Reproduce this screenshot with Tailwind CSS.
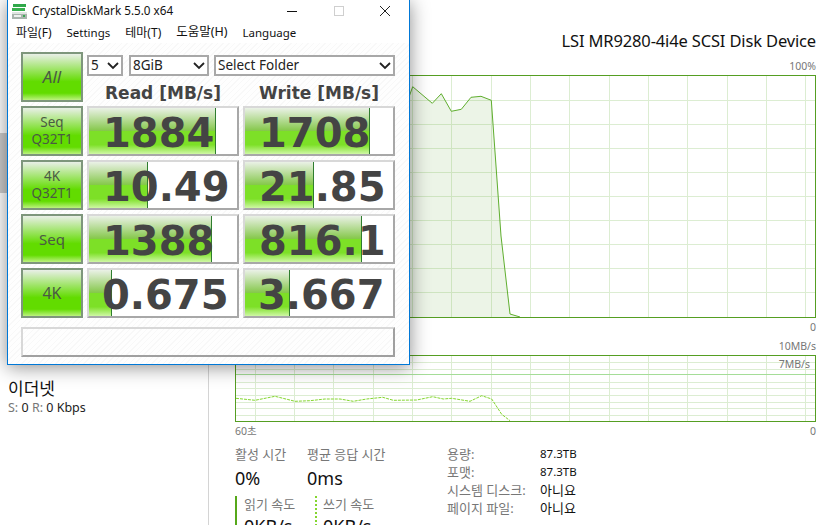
<!DOCTYPE html>
<html lang="ko">
<head>
  <meta charset="UTF-8">
  <title>CrystalDiskMark</title>
  <script src="https://cdn.jsdelivr.net/npm/@tailwindcss/browser@4"></script>
</head>
<body class="bg-white overflow-hidden font-['Noto_Sans','Noto_Sans_CJK_KR',sans-serif]">
  <div class="relative w-[817px] h-[525px] overflow-hidden flex">

    <!-- task manager: left list -->
    <aside class="w-[209px] h-full border-r border-[#d4d4d4] shrink-0 relative">
      <div class="h-[133px]"></div>
      <div class="h-[60px] bg-[#cccccc]"></div>
      <div class="h-[184px]"></div>
      <div class="pl-2 text-[17px] leading-6 text-[#111]">이더넷</div>
      <div class="pl-2 text-[12.5px] leading-[14px] text-[#777]">S: <span class="text-[#222]">0</span> R: <span class="text-[#222]">0 Kbps</span></div>
    </aside>

    <!-- task manager: disk detail -->
    <main class="flex-1 pl-[26px] pr-[1px] flex flex-col *:shrink-0">
      <div class="h-[55px] pt-[30px] text-right text-[16.5px] leading-[22px] text-[#111] tracking-[-0.15px]">LSI MR9280-4i4e SCSI Disk Device</div>
      <div class="h-[20px] pt-[1px] text-right text-[10.5px] leading-[20px] text-[#777]">100%</div>
      <svg class="block" width="581" height="243" viewBox="235 75 581 243">
        <g stroke="#dcedd2" stroke-width="1">
          <path d="M235 100.500H815M235 124.500H815M235 148.500H815M235 172.500H815M235 196.500H815M235 220.500H815M235 244.500H815M235 268.500H815M235 292.500H815"/>
          <path d="M255.500 75V317M294.500 75V317M333.500 75V317M373.500 75V317M412.500 75V317M451.500 75V317M491.500 75V317M530.500 75V317M569.500 75V317M609.500 75V317M648.500 75V317M687.500 75V317M727.500 75V317M766.500 75V317M805.500 75V317"/>
        </g>
        <path d="M235 100L409 97L412.700 86.700L432.300 103.300L441.300 93.700L451.300 111.300L461.300 109.300L471 97.300L481 96.300L491.300 100.300L496.300 170L501 236L510 314L520 317L235 317Z" fill="#77b255" fill-opacity=".14"/>
        <path d="M235 100L409 97L412.700 86.700L432.300 103.300L441.300 93.700L451.300 111.300L461.300 109.300L471 97.300L481 96.300L491.300 100.300L496.300 170L501 236L510 314L520 317" fill="none" stroke="#5fae2e" stroke-width="1"/>
        <rect x="235.500" y="75.500" width="580" height="242" fill="none" stroke="#559e22" stroke-width="1"/>
      </svg>
      <div class="h-[18px] text-right text-[10.5px] leading-[18px] text-[#777]">0</div>
      <div class="h-[19px] text-right text-[10.5px] leading-[20px] text-[#777]">10MB/s</div>
      <div class="relative">
        <svg class="block" width="581" height="67" viewBox="235 355 581 67">
          <g stroke="#dcedd2" stroke-width="1">
            <path d="M235 362.500H815M235 369.500H815M235 382.500H815M235 388.500H815M235 395.500H815M235 402.500H815M235 408.500H815M235 415.500H815"/>
            <path d="M255.500 355V421M294.500 355V421M333.500 355V421M373.500 355V421M412.500 355V421M451.500 355V421M491.500 355V421M530.500 355V421M569.500 355V421M609.500 355V421M648.500 355V421M687.500 355V421M727.500 355V421M766.500 355V421M805.500 355V421"/>
          </g>
          <path d="M235 374.500H815" stroke="#a5dd98" stroke-width="1"/>
          <path d="M236 398.300L255 400.300L275 396.300L295 401.300L310 400.700L325 399L340 399L353.300 401.300L366.700 399L382.700 397.300L393.300 400.300L416.700 400L432.700 396.700L443.300 399L451.700 398.300L470 401.300L481.700 395.700L491.700 399L501.700 414.300L510 420.700" fill="none" stroke="#84d62f" stroke-width="1" stroke-dasharray="3 1"/>
          <rect x="235.500" y="355.500" width="580" height="66" fill="none" stroke="#559e22" stroke-width="1"/>
        </svg>
        <span class="absolute right-[6px] top-0 text-[10.5px] leading-[18px] text-[#777]">7MB/s</span>
      </div>
      <div class="h-[20px] flex justify-between text-[10.5px] leading-[18px] text-[#777]"><span>60초</span><span>0</span></div>

      <div class="flex items-start pt-[3px]">
        <div class="w-[212px]">
          <div class="flex">
            <div class="w-[72px]">
              <div class="text-[13px] leading-[18px] text-[#777]">활성 시간</div>
              <div class="text-[18px] leading-[31px] text-[#111]">0%</div>
            </div>
            <div>
              <div class="text-[13px] leading-[18px] text-[#777]">평균 응답 시간</div>
              <div class="text-[18px] leading-[31px] text-[#111]">0ms</div>
            </div>
          </div>
          <div class="flex pt-[2px]">
            <div class="w-[80px] flex">
              <div class="w-[2px] h-[30px] bg-[#56a81a] mr-[7px]"></div>
              <div>
                <div class="text-[13px] leading-[16px] text-[#777]">읽기 속도</div>
                <div class="text-[18px] leading-[28px] text-[#111] whitespace-nowrap">0KB/s</div>
              </div>
            </div>
            <div class="flex">
              <div class="w-[2px] h-[30px] border-l-2 border-dotted border-[#84d62f] mr-[6px]"></div>
              <div>
                <div class="text-[13px] leading-[16px] text-[#777]">쓰기 속도</div>
                <div class="text-[18px] leading-[28px] text-[#111] whitespace-nowrap">0KB/s</div>
              </div>
            </div>
          </div>
        </div>
        <div class="grid grid-cols-[93px_auto] justify-start text-[13px] leading-[18px]">
          <span class="text-[#777]">용량:</span><span class="text-[#111] text-[11.500px]">87.3TB</span>
          <span class="text-[#777]">포맷:</span><span class="text-[#111] text-[11.500px]">87.3TB</span>
          <span class="text-[#777] whitespace-nowrap">시스템 디스크:</span><span class="text-[#111]">아니요</span>
          <span class="text-[#777] whitespace-nowrap">페이지 파일:</span><span class="text-[#111]">아니요</span>
        </div>
      </div>
    </main>

    <!-- CrystalDiskMark window on top -->
    <section class="absolute left-[7px] top-0 w-[403px] h-[365px] border border-t-0 border-[#0078d7] bg-white shadow-[0_2px_18px_rgba(0,0,0,0.45)] flex flex-col">
      <header class="h-[22px] flex items-center shrink-0">
        <svg class="ml-[3px] mr-[4px]" width="17" height="17" viewBox="0 0 17 17">
          <rect x="2" y="1" width="13" height="3" fill="#2fa84a"/>
          <rect x="1" y="5" width="13" height="3" fill="#38b04f"/>
          <rect x="1" y="9" width="15" height="7" fill="#a9b4ad"/>
          <rect x="1" y="9" width="15" height="2" fill="#dfe5e0"/>
          <rect x="3" y="12" width="7" height="2" fill="#eef1ee"/>
          <rect x="12" y="12" width="2" height="2" fill="#3aa853"/>
        </svg>
        <span class="text-[11.700px] text-[#111]">CrystalDiskMark 5.5.0 x64</span>
        <svg class="ml-auto mr-[12px]" width="110" height="12" viewBox="0 0 110 12">
          <path d="M0 6.500H10" stroke="#111" stroke-width="1"/>
          <rect x="47.500" y="1.500" width="9" height="9" fill="none" stroke="#cfcfcf"/>
          <path d="M93 1L103 11M103 1L93 11" stroke="#222" stroke-width="1"/>
        </svg>
      </header>
      <nav class="h-[21px] flex items-center pl-[8px] gap-[15px] text-[12px] text-[#111] shrink-0">
        <span>파일(F)</span><span class="text-[11.500px]">Settings</span><span>테마(T)</span><span class="text-[12.500px]">도움말(H)</span><span class="text-[11.500px]">Language</span>
      </nav>
      <div class="flex-1 bg-[#fdfdfd] bg-[repeating-linear-gradient(135deg,#f8f8f8_0,#f8f8f8_1px,#fefefe_1px,#fefefe_4px)] pl-[13px] pt-[9px] flex flex-col">
        <div class="flex gap-[4px] h-[50px]">
          <div class="w-[62px] h-[50px] flex items-center justify-center border-2 border-[#7e967c] bg-[linear-gradient(180deg,#e9efe7_0%,#62dc00_60%,#62dc00_85%,#bcf27e_100%)] text-[17px] italic text-[#4a5a44]">All</div>
          <div class="w-[312px]">
            <div class="flex pt-[3px] gap-[6px] text-[13.5px] text-[#222]">
              <div class="w-[36px] h-[21px] border-2 border-[#a8a8a8] bg-white flex items-center justify-between px-[2px]">5<svg width="12" height="8" viewBox="0 0 12 8"><path d="M1 1L6 6L11 1" fill="none" stroke="#222" stroke-width="1.800"/></svg></div>
              <div class="w-[80px] h-[21px] border-2 border-[#a8a8a8] bg-white flex items-center justify-between px-[2px]">8GiB<svg width="12" height="8" viewBox="0 0 12 8"><path d="M1 1L6 6L11 1" fill="none" stroke="#222" stroke-width="1.800"/></svg></div>
              <div class="w-[181px] h-[21px] border-2 border-[#a8a8a8] bg-white flex items-center justify-between px-[2px] ml-[-1px]">Select Folder<svg width="12" height="8" viewBox="0 0 12 8"><path d="M1 1L6 6L11 1" fill="none" stroke="#222" stroke-width="1.800"/></svg></div>
            </div>
            <div class="flex h-[36px] items-center font-['DejaVu_Sans',sans-serif] font-bold text-[17px] text-[#444]">
              <span class="w-[156px] text-center pr-[4px] whitespace-nowrap">Read [MB/s]</span>
              <span class="w-[152px] text-center whitespace-nowrap">Write [MB/s]</span>
            </div>
          </div>
        </div>

        <div class="flex flex-col gap-[4px] pt-[4px]">
          <div class="flex gap-[4px]">
            <div class="w-[62px] h-[50px] flex flex-col items-center justify-center border-2 border-[#7e967c] bg-[linear-gradient(180deg,#e9efe7_0%,#62dc00_60%,#62dc00_85%,#bcf27e_100%)] text-[13.500px] leading-[17px] text-[#4a5a44]"><span>Seq</span><span>Q32T1</span></div>
            <div class="relative w-[152px] h-[50px] border-2 border-[#d8d8d8] border-r-[#a8a8a8] border-b-[#a8a8a8] bg-white">
              <div class="h-full w-[127px] border-r border-r-[#2f7d2f] bg-[linear-gradient(180deg,#eaf1e6_0%,#86c84c_49%,#7de027_50%,#7de027_80%,#cff7a5_100%)]"></div>
              <span class="absolute left-[14px] top-[2px] font-['DejaVu_Sans',sans-serif] font-bold text-[40px] leading-[46px] text-[#444]">1884</span>
            </div>
            <div class="relative w-[152px] h-[50px] border-2 border-[#d8d8d8] border-r-[#a8a8a8] border-b-[#a8a8a8] bg-white">
              <div class="h-full w-[125px] border-r border-r-[#2f7d2f] bg-[linear-gradient(180deg,#eaf1e6_0%,#86c84c_49%,#7de027_50%,#7de027_80%,#cff7a5_100%)]"></div>
              <span class="absolute left-[14px] top-[2px] font-['DejaVu_Sans',sans-serif] font-bold text-[40px] leading-[46px] text-[#444]">1708</span>
            </div>
          </div>
          <div class="flex gap-[4px]">
            <div class="w-[62px] h-[50px] flex flex-col items-center justify-center border-2 border-[#7e967c] bg-[linear-gradient(180deg,#e9efe7_0%,#62dc00_60%,#62dc00_85%,#bcf27e_100%)] text-[13.500px] leading-[17px] text-[#4a5a44]"><span>4K</span><span>Q32T1</span></div>
            <div class="relative w-[152px] h-[50px] border-2 border-[#d8d8d8] border-r-[#a8a8a8] border-b-[#a8a8a8] bg-white">
              <div class="h-full w-[59px] border-r border-r-[#2f7d2f] bg-[linear-gradient(180deg,#eaf1e6_0%,#86c84c_49%,#7de027_50%,#7de027_80%,#cff7a5_100%)]"></div>
              <span class="absolute left-[14px] top-[2px] font-['DejaVu_Sans',sans-serif] font-bold text-[40px] leading-[46px] text-[#444]">10.49</span>
            </div>
            <div class="relative w-[152px] h-[50px] border-2 border-[#d8d8d8] border-r-[#a8a8a8] border-b-[#a8a8a8] bg-white">
              <div class="h-full w-[69px] border-r border-r-[#2f7d2f] bg-[linear-gradient(180deg,#eaf1e6_0%,#86c84c_49%,#7de027_50%,#7de027_80%,#cff7a5_100%)]"></div>
              <span class="absolute left-[14px] top-[2px] font-['DejaVu_Sans',sans-serif] font-bold text-[40px] leading-[46px] text-[#444]">21.85</span>
            </div>
          </div>
          <div class="flex gap-[4px]">
            <div class="w-[62px] h-[50px] flex items-center justify-center border-2 border-[#7e967c] bg-[linear-gradient(180deg,#e9efe7_0%,#62dc00_60%,#62dc00_85%,#bcf27e_100%)] text-[15px] text-[#4a5a44]">Seq</div>
            <div class="relative w-[152px] h-[50px] border-2 border-[#d8d8d8] border-r-[#a8a8a8] border-b-[#a8a8a8] bg-white">
              <div class="h-full w-[123px] border-r border-r-[#2f7d2f] bg-[linear-gradient(180deg,#eaf1e6_0%,#86c84c_49%,#7de027_50%,#7de027_80%,#cff7a5_100%)]"></div>
              <span class="absolute left-[14px] top-[2px] font-['DejaVu_Sans',sans-serif] font-bold text-[40px] leading-[46px] text-[#444]">1388</span>
            </div>
            <div class="relative w-[152px] h-[50px] border-2 border-[#d8d8d8] border-r-[#a8a8a8] border-b-[#a8a8a8] bg-white">
              <div class="h-full w-[117px] border-r border-r-[#2f7d2f] bg-[linear-gradient(180deg,#eaf1e6_0%,#86c84c_49%,#7de027_50%,#7de027_80%,#cff7a5_100%)]"></div>
              <span class="absolute left-[14px] top-[2px] font-['DejaVu_Sans',sans-serif] font-bold text-[40px] leading-[46px] text-[#444]">816.1</span>
            </div>
          </div>
          <div class="flex gap-[4px]">
            <div class="w-[62px] h-[50px] flex items-center justify-center border-2 border-[#7e967c] bg-[linear-gradient(180deg,#e9efe7_0%,#62dc00_60%,#62dc00_85%,#bcf27e_100%)] text-[16px] text-[#4a5a44]">4K</div>
            <div class="relative w-[152px] h-[50px] border-2 border-[#d8d8d8] border-r-[#a8a8a8] border-b-[#a8a8a8] bg-white">
              <div class="h-full w-[23px] border-r border-r-[#2f7d2f] bg-[linear-gradient(180deg,#eaf1e6_0%,#86c84c_49%,#7de027_50%,#7de027_80%,#cff7a5_100%)]"></div>
              <span class="absolute left-[13px] top-[2px] font-['DejaVu_Sans',sans-serif] font-bold text-[40px] leading-[46px] text-[#444]">0.675</span>
            </div>
            <div class="relative w-[152px] h-[50px] border-2 border-[#d8d8d8] border-r-[#a8a8a8] border-b-[#a8a8a8] bg-white">
              <div class="h-full w-[45px] border-r border-r-[#2f7d2f] bg-[linear-gradient(180deg,#eaf1e6_0%,#86c84c_49%,#7de027_50%,#7de027_80%,#cff7a5_100%)]"></div>
              <span class="absolute left-[13px] top-[2px] font-['DejaVu_Sans',sans-serif] font-bold text-[40px] leading-[46px] text-[#444]">3.667</span>
            </div>
          </div>
        </div>
        <div class="mt-[9px] w-[374px] h-[30px] border-2 border-[#d8d8d8] border-r-[#a0a0a0] border-b-[#a0a0a0]"></div>
      </div>
    </section>
  </div>
</body>
</html>
